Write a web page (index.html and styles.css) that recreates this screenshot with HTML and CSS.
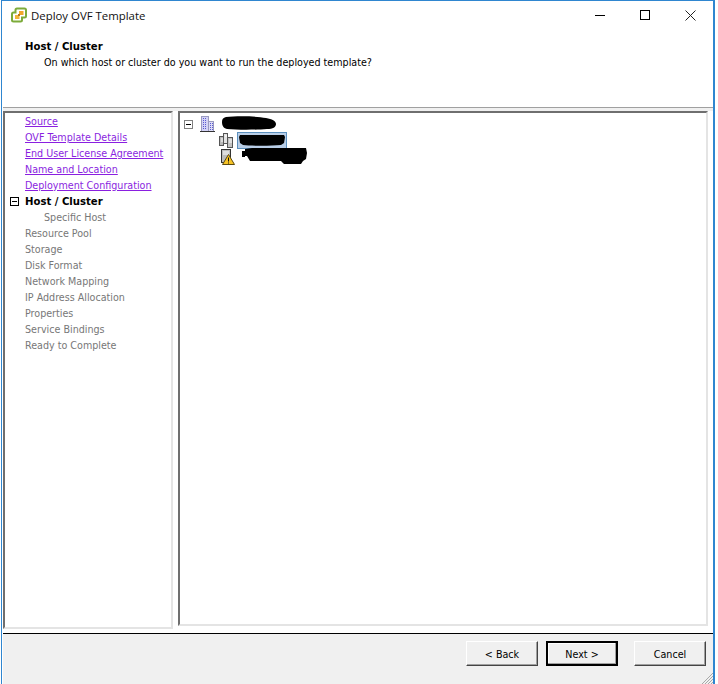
FILE: index.html
```html
<!DOCTYPE html>
<html lang="en">
<head>
<meta charset="utf-8">
<title>Deploy OVF Template</title>
<link rel="stylesheet" href="styles.css">
</head>
<body>
<div class="window">
  <header class="head">
    <div class="titlebar">
      <svg class="logo" width="16" height="16" viewBox="0 0 16 16">
        <path d="M6 1.500h7.500a1.500 1.500 0 0 1 1.500 1.500v6a1.500 1.500 0 0 1-1.500 1.500H11v2.500a1.500 1.500 0 0 1-1.500 1.500H2.500A1.500 1.500 0 0 1 1 13V7a1.500 1.500 0 0 1 1.500-1.500H4.500V3a1.500 1.500 0 0 1 1.500-1.500z" fill="#fff" stroke="#7cab3a" stroke-width="2"/>
        <rect x="8" y="4" width="4.500" height="4" fill="#f0a62a"/>
        <rect x="4" y="8" width="4.500" height="4" fill="#f2b53c"/>
        <rect x="7" y="7" width="2" height="2" fill="#b9791a"/>
      </svg>
      <span class="title">Deploy OVF Template</span>
      <div class="controls">
        <svg width="10" height="10" viewBox="0 0 10 10"><path d="M0 5.500h10" stroke="#000" fill="none"/></svg>
        <svg width="10" height="10" viewBox="0 0 10 10"><rect x=".5" y=".5" width="9" height="9" stroke="#000" fill="none"/></svg>
        <svg width="11" height="11" viewBox="0 0 11 11"><path d="M.5.500l10 10M10.500.500l-10 10" stroke="#222" fill="none"/></svg>
      </div>
    </div>
    <h1 class="heading">Host / Cluster</h1>
    <p class="sub">On which host or cluster do you want to run the deployed template?</p>
  </header>

  <main class="main">
    <nav class="panel nav">
      <a class="link" href="#a">Source</a>
      <a class="link" href="#b">OVF Template Details</a>
      <a class="link" href="#c">End User License Agreement</a>
      <a class="link" href="#d">Name and Location</a>
      <a class="link" href="#e">Deployment Configuration</a>
      <div class="step current"><span class="toggle nav-toggle"></span>Host / Cluster</div>
      <div class="step child">Specific Host</div>
      <div class="step">Resource Pool</div>
      <div class="step">Storage</div>
      <div class="step">Disk Format</div>
      <div class="step">Network Mapping</div>
      <div class="step">IP Address Allocation</div>
      <div class="step">Properties</div>
      <div class="step">Service Bindings</div>
      <div class="step">Ready to Complete</div>
    </nav>
    <section class="panel tree">
      <div class="row row-dc">
        <span class="toggle tree-toggle"></span>
        <svg class="bldg" width="16" height="16" viewBox="0 0 16 16">
          <rect x="1.500" y=".5" width="7" height="15" fill="#d3d2f5" stroke="#9a9ac0"/>
          <rect x="8.500" y="5.500" width="5" height="10" fill="#dcdcf5" stroke="#9a9ac0"/>
          <path d="M3 2.500h4M3 4.500h4M3 6.500h4M3 8.500h4M3 10.500h4M3 12.500h4M10 7.500h3M10 9.500h3M10 11.500h3M10 13.500h3" stroke="#5a5ad0" stroke-dasharray="1 1" fill="none"/>
          <path d="M0 15.500h15" stroke="#333" fill="none"/>
        </svg>
        <svg class="blob-svg blob-dc" width="55" height="14" viewBox="0 0 55 14"><path d="M4 1C14 0 34 0 44 2c6 1 10 3 10 6s-3 5-9 5c-12 1-30 1-40 0C1 12 0 9 0 6s1-4 4-5z" fill="#000"/></svg>
      </div>
      <div class="row row-cluster">
        <svg width="15" height="16" viewBox="0 0 15 16">
          <rect x=".5" y="4.500" width="4" height="9" fill="#b8b8b8" stroke="#555"/>
          <rect x="4.500" y="1.500" width="4" height="10" fill="#e2e2e2" stroke="#555"/>
          <rect x="8.500" y="5.500" width="5" height="10" fill="#c2c2c2" stroke="#555"/>
          <path d="M2 7h2M6 4h2M10 8h3M2 9h2M10 10h3" stroke="#fff" fill="none"/>
        </svg>
        <span class="selected">
          <svg class="blob-svg" width="46" height="11" viewBox="0 0 46 11"><path d="M1 0h44l1 2-1 6-3 2c-10 1-30 1-38 0L1 8 0 2z" fill="#000"/></svg>
        </span>
      </div>
      <div class="row row-host">
        <span class="host-icon">
          <svg width="14" height="16" viewBox="0 0 14 16">
            <rect x=".5" y=".5" width="9" height="13" fill="#bdbdbd" stroke="#333"/>
            <path d="M2 3h6M2 5h6" stroke="#fff" fill="none"/>
            <path d="M7.500 5.500L13.500 15.500H1.500z" fill="#f7c325" stroke="#5c4a10"/>
            <path d="M7.500 8.500v4M7.500 13.500v1" stroke="#111" fill="none"/>
          </svg>
        </span>
        <svg class="blob-svg" width="65" height="17" viewBox="0 0 65 17"><path d="M0 3h3V1L10 0H64l1 5-1 6-3 2-2 3-17 0-3-3H8L5 8H3v1H0z" fill="#000"/></svg>
      </div>
    </section>
  </main>

  <footer class="foot">
    <button class="btn" type="button">&lt; Back</button>
    <button class="btn btn-default" type="button">Next &gt;</button>
    <button class="btn btn-cancel" type="button">Cancel</button>
    <svg class="grip" width="12" height="12" viewBox="0 0 12 12">
      <path d="M12 1L1 12M12 4L4 12M12 7L7 12M12 10L10 12" stroke="#a8a8a8" fill="none"/>
    </svg>
  </footer>
</div>
</body>
</html>
```
FILE: styles.css
```css
* { box-sizing: border-box; }
html, body { margin: 0; padding: 0; background: #fff; }
body {
  width: 718px;
  height: 684px;
  overflow: hidden;
  font-family: "DejaVu Sans Condensed", "DejaVu Sans", sans-serif;
  font-size: 10.65px;
  color: #000;
}
.window {
  margin-left: 1px;
  width: 714px;
  height: 684px;
  border: 1px solid #2f86d0;
  border-bottom: 0;
  border-right-width: 2px;
  background: #fff;
  display: flex;
  flex-direction: column;
}
.head { height: 106px; background: #fff; }
.titlebar {
  height: 28px;
  display: flex;
  align-items: center;
  padding-left: 9px;
}
.logo { margin-right: 4px; }
.title {
  font-family: "Open Sans", sans-serif;
  font-size: 11.4px;
  color: #111;
}
.controls {
  margin-left: auto;
  width: 118px;
  padding-right: 17px;
  display: flex;
  justify-content: space-between;
  align-items: center;
}
.heading {
  margin: 10px 0 0 23px;
  font-family: "DejaVu Sans", sans-serif;
  font-size: 10.1px;
  line-height: 16px;
  font-weight: bold;
}
.sub {
  margin: 0 0 0 42px;
  line-height: 16px;
}
.main {
  height: 526px;
  margin-left: 1px;
  border-top: 1px solid #a0a0a0;
  background: linear-gradient(#f0f0f0 3px, #fff 3px);
  padding-top: 3px;
  display: flex;
  align-items: flex-start;
  gap: 5px;
}
.panel {
  background: #fff;
  border-style: solid;
  border-width: 2px;
  border-color: #6f6f6f #e4e4e4 #e4e4e4 #6f6f6f;
}
.nav {
  width: 170px;
  height: 518px;
  padding-top: 1px;
  display: flex;
  flex-direction: column;
}
.link, .step {
  height: 16px;
  line-height: 16px;
  padding-left: 20px;
  white-space: nowrap;
}
.link { color: #8a1fe0; text-decoration: underline; }
.step { color: #777; }
.step.current {
  color: #000;
  font-family: "DejaVu Sans", sans-serif;
  font-size: 10.1px;
  font-weight: bold;
  position: relative;
}
.step.child { padding-left: 39px; }
.toggle {
  display: inline-block;
  width: 9px;
  height: 9px;
  background: #fff;
  position: relative;
}
.toggle::after {
  content: "";
  position: absolute;
  left: 1px;
  right: 1px;
  top: 3px;
  height: 1px;
  background: #000;
}
.nav-toggle {
  position: absolute;
  left: 5px;
  top: 3px;
  border: 1px solid #000;
}
.tree {
  width: 530px;
  height: 515px;
  padding: 3px 0 0 4px;
  background: #fff;
}
.row {
  display: flex;
  align-items: center;
  height: 16px;
}
.tree-toggle {
  border: 1px solid #808080;
  margin-right: 7px;
}
.bldg { flex: none; margin-right: 6px; }
.blob-dc { flex: none; margin-top: -3px; }
.row-cluster { padding-left: 35px; }
.row-cluster > svg { margin-right: 3px; flex: none; }
.row-host { padding-left: 37px; height: 17px; }
.host-icon { display: flex; margin-right: 7px; }
.blob-svg { display: block; }
.selected {
  width: 50px;
  height: 17px;
  background: #b8cde6;
  border: 1px solid #5b8fbd;
  display: flex;
  align-items: center;
  justify-content: center;
}
.foot {
  flex: 1;
  margin-left: 1px;
  border-top: 1px solid #000;
  background: #f0f0f0;
  position: relative;
  padding: 7px 0 0 463px;
  display: flex;
  align-items: flex-start;
  gap: 8px;
}
.btn {
  width: 72px;
  height: 25px;
  padding: 1px 0 0;
  font-family: "DejaVu Sans Condensed", "DejaVu Sans", sans-serif;
  font-size: 10.65px;
  color: #000;
  background: #f0f0f0;
  border: 1px solid;
  border-color: #fff #444 #444 #fff;
  box-shadow: inset -1px -1px 0 #a0a0a0;
}
.btn-default {
  border: 2px solid #000;
  box-shadow: inset -1px -1px 0 #a0a0a0, inset 1px 1px 0 #fff;
}
.btn-cancel { margin-left: 8px; }
.grip {
  position: absolute;
  right: 0;
  bottom: 0;
}
```
